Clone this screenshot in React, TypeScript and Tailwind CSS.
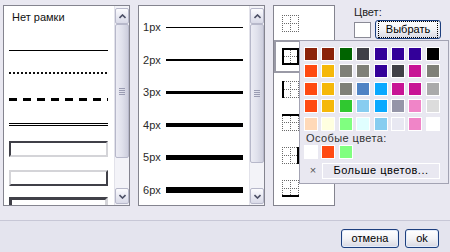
import React from "react";

const palette = [
  ["#8b2209", "#8b2209", "#006400", "#404047", "#330099", "#330099", "#330099", "#000000"],
  ["#ff4a12", "#f5b80a", "#7f8078", "#7f8078", "#330099", "#404047", "#c81495", "#7f8078"],
  ["#ff4a12", "#f5b80a", "#7f8078", "#4f83c4", "#0aa9ff", "#c81495", "#c81495", "#aaaaaa"],
  ["#ff4a12", "#f5b80a", "#30c830", "#87cdf0", "#0aa9ff", "#9595a8", "#f085c8", "#dcdcdc"],
  ["#ffd9b8", "#ffffe0", "#80ff80", "#e0ffff", "#87cdf0", "#e8e8f2", "#f085c8", "#ffffff"],
];

const special = ["#ffffff", "#ff4a12", "#80ff80"];

const Chevron = ({ up }: { up?: boolean }) => (
  <svg width="7" height="5" viewBox="0 0 7 5">
    <path
      d={up ? "M0.5 4 L3.5 1 L6.5 4" : "M0.5 1 L3.5 4 L6.5 1"}
      fill="none"
      stroke="#4d5066"
      strokeWidth="1.6"
    />
  </svg>
);

// fake XP style vertical scrollbar
const Scrollbar = ({ thumb }: { thumb: number }) => (
  <div className="w-[15px] flex flex-col bg-[#f3f3f8] border-l border-[#e2e2ea] pt-[2px] pb-[1px]">
    <div className="h-[16px] shrink-0 rounded-[2px] border border-[#b7b8ca] bg-linear-to-b from-[#fbfbfe] to-[#d9dae8] flex items-center justify-center">
      <Chevron up />
    </div>
    <div
      className="shrink-0 rounded-[2px] border border-[#b7b8ca] bg-linear-to-r from-[#ececf4] via-[#e0e1ec] to-[#cdcedd] flex flex-col items-center justify-center gap-[1px]"
      style={{ height: thumb }}
    >
      {[0, 1, 2, 3].map((i) => (
        <div key={i} className="w-[6px] h-[1px] bg-[#9a9cb2]" />
      ))}
    </div>
    <div className="flex-1" />
    <div className="h-[16px] shrink-0 rounded-[2px] border border-[#b7b8ca] bg-linear-to-b from-[#fbfbfe] to-[#d9dae8] flex items-center justify-center">
      <Chevron />
    </div>
  </div>
);

const BorderIcon = ({ side }: { side?: string }) => (
  <svg width="17" height="17" viewBox="0 0 17 17" shapeRendering="crispEdges">
    <g stroke="#6a6a6a" strokeDasharray="1 1" strokeWidth="1">
      <line x1="0" y1="0.5" x2="17" y2="0.5" />
      <line x1="0" y1="16.5" x2="17" y2="16.5" />
      <line x1="0.5" y1="0" x2="0.5" y2="17" />
      <line x1="16.5" y1="0" x2="16.5" y2="17" />
      <line x1="0" y1="8.5" x2="17" y2="8.5" />
      <line x1="8.5" y1="0" x2="8.5" y2="17" />
    </g>
    <g stroke="#000" strokeWidth="2">
      {(side === "all" || side === "top") && <line x1="0" y1="1" x2="17" y2="1" />}
      {(side === "all" || side === "bottom") && <line x1="0" y1="16" x2="17" y2="16" />}
      {(side === "all" || side === "left") && <line x1="1" y1="0" x2="1" y2="17" />}
      {(side === "all" || side === "right") && <line x1="16" y1="0" x2="16" y2="17" />}
    </g>
  </svg>
);

const XpButton = ({ children, className }: { children: React.ReactNode; className?: string }) => (
  <button
    className={`h-[19px] rounded-[3px] border border-[#1d3f7e] bg-linear-to-b from-white via-[#f3f3f6] to-[#d8d8e2] shadow-[inset_0_0_0_1px_#e4ecfa] text-[11px] leading-none text-black flex items-center justify-center ${className}`}
  >
    {children}
  </button>
);

export default function App() {
  return (
    <div className="w-[450px] h-[252px] bg-[#e9e8f1] font-['Liberation_Sans',Arial,sans-serif] text-[11px] text-black relative overflow-hidden flex flex-col">
      <div className="h-[220px] shrink-0 flex pl-[3px] pt-[5px] gap-[8px]">
        {/* border style list */}
        <div className="w-[127px] h-[201px] border border-[#84848f] bg-white flex">
          <div className="flex-1 flex flex-col pl-[5px] pr-[6px] overflow-hidden">
            <div className="shrink-0 mt-[5px] h-[13px] leading-[13px] pl-[3px] text-[#111]">Нет рамки</div>
            <div className="shrink-0 mt-[26px] h-[1px] bg-black" />
            <svg className="mt-[21px] shrink-0" width="99" height="2">
              <line x1="0" y1="1" x2="99" y2="1" stroke="#111" strokeWidth="2" strokeDasharray="2 2" />
            </svg>
            <svg className="mt-[24px] shrink-0" width="99" height="3">
              <line x1="0" y1="1.5" x2="99" y2="1.5" stroke="#000" strokeWidth="3" strokeDasharray="8 6" />
            </svg>
            <div className="shrink-0 mt-[22px] h-[3px] border-y border-black" />
            <div className="mt-[15px] h-[16px] shrink-0 border-2 border-t-[#404048] border-l-[#404048] border-b-[#d4d4d8] border-r-[#d4d4d8]" />
            <div className="mt-[13px] h-[16px] shrink-0 border-2 border-t-[#d4d4d8] border-l-[#d4d4d8] border-b-[#404048] border-r-[#404048]" />
            <div className="mt-[11px] h-[16px] shrink-0 border-[3px] border-t-[#404048] border-l-[#404048] border-b-[#d4d4d8] border-r-[#d4d4d8]" />
          </div>
          <Scrollbar thumb={134} />
        </div>

        {/* widths */}
        <div className="w-[127px] h-[201px] border border-[#84848f] bg-white flex">
          <div className="flex-1 flex flex-col pt-[5px] pl-[4px] overflow-hidden">
            {[1, 2, 3, 4, 5, 6].map((w) => (
              <div key={w} className="h-[32.6px] shrink-0 flex items-center">
                <span className="w-[23px] text-[#2a2a2a]">{w}px</span>
                <div className="w-[77px] bg-black" style={{ height: w }} />
              </div>
            ))}
          </div>
          <Scrollbar thumb={139} />
        </div>

        {/* border positions */}
        <div className="w-[62px] h-[201px] border border-[#84848f] bg-white flex flex-col pt-[1px]">
          {["none", "all", "left", "top", "right", "bottom"].map((s) => (
            <div
              key={s}
              className={`h-[33px] shrink-0 flex items-center ${
                s === "all" ? "border-2 border-[#9a9aa6] pl-[6px]" : "pl-[8px]"
              }`}
            >
              <BorderIcon side={s} />
            </div>
          ))}
        </div>

        {/* colour */}
        <div className="ml-[11px] flex flex-col">
          <div className="mt-[1px] h-[13px] leading-[13px] text-[#222]">Цвет:</div>
          <div className="mt-[1px] flex items-start gap-[4px]">
            <div className="mt-[2px] w-[17px] h-[16px] border border-[#8a8a96] bg-white" />
            <XpButton className="w-[66px]">
              <span className="outline-1 outline-dotted outline-black px-[3px] py-[2px] w-[58px]">Выбрать</span>
            </XpButton>
          </div>
        </div>
      </div>

      <div className="flex-1 border-t border-[#c7c7d6] bg-[#e4e4ee] flex justify-end items-start pt-[8px] pr-[11px] gap-[6px]">
        <XpButton className="w-[58px]">отмена</XpButton>
        <XpButton className="w-[34px]">ok</XpButton>
      </div>

      {/* colour picker dropdown */}
      <div className="absolute left-[299px] top-[40px] w-[150px] h-[144px] border border-[#a3a3b3] bg-[#e9e8f1] pl-[4px] pt-[6px] flex flex-col">
        <div className="grid grid-cols-[repeat(8,14px)] gap-[3.4px]">
          {palette.flat().map((c, i) => (
            <div key={i} className="w-[14px] h-[14px] border border-white" style={{ background: c }} />
          ))}
        </div>
        <div className="mt-[1px] h-[13px] leading-[13px] pl-[2px] text-[#333] tracking-[0.4px]">Особые цвета:</div>
        <div className="flex gap-[3.4px]">
          {special.map((c, i) => (
            <div key={i} className="w-[14px] h-[14px] border border-white" style={{ background: c }} />
          ))}
        </div>
        <div className="mt-[4px] flex items-center">
          <div className="w-[18px] h-[16px] flex items-center justify-center text-[#555] text-[11px]">×</div>
          <div className="w-[118px] h-[16px] border border-white flex items-center justify-center tracking-[0.5px] text-black">
            Больше цветов...
          </div>
        </div>
      </div>
    </div>
  );
}
